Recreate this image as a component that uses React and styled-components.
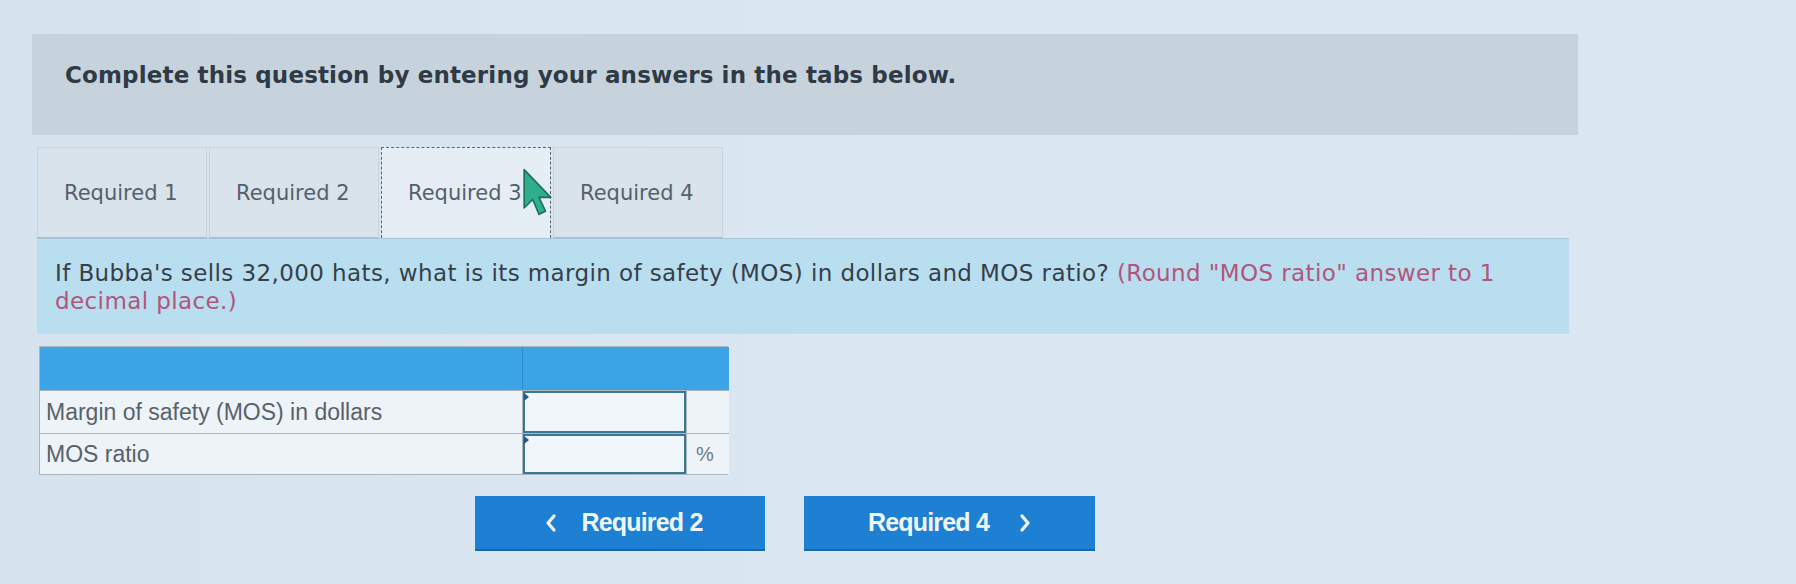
import React from "react"
import styled, { createGlobalStyle } from "styled-components"

const GlobalStyle = createGlobalStyle`
  html, body {
    margin: 0;
    padding: 0;
    background: #d7e5f0;
  }
  body {
    font-family: "DejaVu Sans", Verdana, sans-serif;
    width: 1796px;
    height: 584px;
    overflow: hidden;
  }
`

const Page = styled.div`
  position: relative;
  padding: 34px 0 0 32px;
  width: 1796px;
  height: 584px;
  box-sizing: border-box;
  background: linear-gradient(90deg, #d5e3ef 0%, #dbe8f3 55%, #dae7f2 100%);
`

const Instructions = styled.div`
  width: 1546px;
  height: 101px;
  box-sizing: border-box;
  background: #c6d2dc;
  padding: 28px 0 0 33px;
  font-size: 23px;
  font-weight: bold;
  letter-spacing: 0.15px;
  color: #2f3a45;
`

const TabBar = styled.div`
  display: flex;
  margin: 12px 0 0 5px;
  height: 91px;
`

const Tab = styled.div`
  width: 170px;
  height: 91px;
  box-sizing: border-box;
  display: flex;
  align-items: center;
  padding: 0 0 0 26px;
  font-size: 21px;
  color: #56606a;
  background: ${p => (p.active ? "#e6eef5" : "#d9e3ec")};
  border: ${p => (p.active ? "1.5px dashed #5a6570" : "1px solid #c9d4dd")};
  border-bottom: ${p => (p.active ? "none" : "1px solid #aebbc6")};
  margin-right: 2px;
`

const Question = styled.div`
  margin-left: 5px;
  width: 1532px;
  height: 96px;
  box-sizing: border-box;
  background: #b9deef;
  border-top: 1px solid #a8c6d6;
  padding: 20px 50px 0 18px;
  font-size: 23px;
  line-height: 28px;
  letter-spacing: 0.4px;
  color: #353f4a;
`

const Hint = styled.span`
  color: #b1567a;
`

const Table = styled.div`
  margin: 12px 0 0 7px;
  width: 689px;
  display: grid;
  grid-template-columns: 482px 164px 43px;
  border: 1px solid #a9b5bf;
  box-sizing: border-box;
`

const HeadCell = styled.div`
  height: 43px;
  background: #3ba4e6;
  grid-column: ${p => p.span || "auto"};
  border-left: ${p => (p.first ? "none" : "1px solid #2f8ccc")};
`

const Cell = styled.div`
  height: ${p => p.h}px;
  box-sizing: border-box;
  background: #eef3f7;
  border-top: 1px solid #a9b5bf;
  border-left: ${p => (p.first ? "none" : "1px solid #a9b5bf")};
  display: flex;
  align-items: center;
  padding: ${p => (p.input ? "0" : "0 0 0 6px")};
  font-family: "Liberation Sans", Arial, sans-serif;
  font-size: 23px;
  color: #58626c;
`

const Input = styled.div`
  position: relative;
  width: 100%;
  height: 100%;
  box-sizing: border-box;
  background: #f1f6fa;
  border: 2px solid #3c7896;

  &::before {
    content: "";
    position: absolute;
    left: -1px;
    top: 0;
    border-left: 5px solid #1f5a86;
    border-top: 4px solid transparent;
    border-bottom: 4px solid transparent;
  }
`

const Unit = styled.span`
  font-size: 20px;
  color: #6e7a85;
  margin-left: 9px;
`

const Nav = styled.div`
  display: flex;
  gap: 39px;
  margin: 21px 0 0 443px;
`

const NavButton = styled.div`
  width: ${p => p.w}px;
  height: 55px;
  box-sizing: border-box;
  background: #1d80d2;
  border-bottom: 2px solid #1667ae;
  display: flex;
  align-items: center;
  justify-content: center;
  gap: ${p => (p.left ? "24px" : "30px")};
  padding: ${p => (p.left ? "0 0 0 8px" : "0")};
  font-family: "Liberation Sans", Arial, sans-serif;
  font-weight: bold;
  font-size: 25px;
  letter-spacing: -0.8px;
  color: #eef6fc;
`

const Cursor = styled.svg`
  position: absolute;
  left: 522px;
  top: 167px;
`

const Chevron = ({ dir }) => (
  <svg width="12" height="20" viewBox="0 0 12 20">
    <path
      d={dir === "left" ? "M9 3 L3 10 L9 17" : "M3 3 L9 10 L3 17"}
      fill="none"
      stroke="#eef6fc"
      strokeWidth="3.2"
      strokeLinecap="round"
      strokeLinejoin="round"
    />
  </svg>
)

export default function App() {
  return (
    <Page>
      <GlobalStyle />
      <Instructions>
        Complete this question by entering your answers in the tabs below.
      </Instructions>

      <TabBar>
        <Tab>Required 1</Tab>
        <Tab>Required 2</Tab>
        <Tab active>Required 3</Tab>
        <Tab>Required 4</Tab>
      </TabBar>

      <Question>
        If Bubba's sells 32,000 hats, what is its margin of safety (MOS) in
        dollars and MOS ratio?{" "}
        <Hint>(Round "MOS ratio" answer to 1 decimal place.)</Hint>
      </Question>

      <Table>
        <HeadCell first />
        <HeadCell span="span 2" />

        <Cell first h={43}>Margin of safety (MOS) in dollars</Cell>
        <Cell input h={43}>
          <Input />
        </Cell>
        <Cell h={43} />

        <Cell first h={41}>MOS ratio</Cell>
        <Cell input h={41}>
          <Input />
        </Cell>
        <Cell h={41} input>
          <Unit>%</Unit>
        </Cell>
      </Table>

      <Nav>
        <NavButton w={290} left>
          <Chevron dir="left" />
          Required 2
        </NavButton>
        <NavButton w={291}>
          Required 4
          <Chevron dir="right" />
        </NavButton>
      </Nav>

      <Cursor width="32" height="50" viewBox="0 0 30 46">
        <path
          d="M2 2 L2 38 L10 30 L16 44 L22 41 L16 28 L27 28 Z"
          fill="#2eae8c"
          stroke="#1d6f5a"
          strokeWidth="1.5"
          strokeLinejoin="round"
        />
      </Cursor>
    </Page>
  )
}
